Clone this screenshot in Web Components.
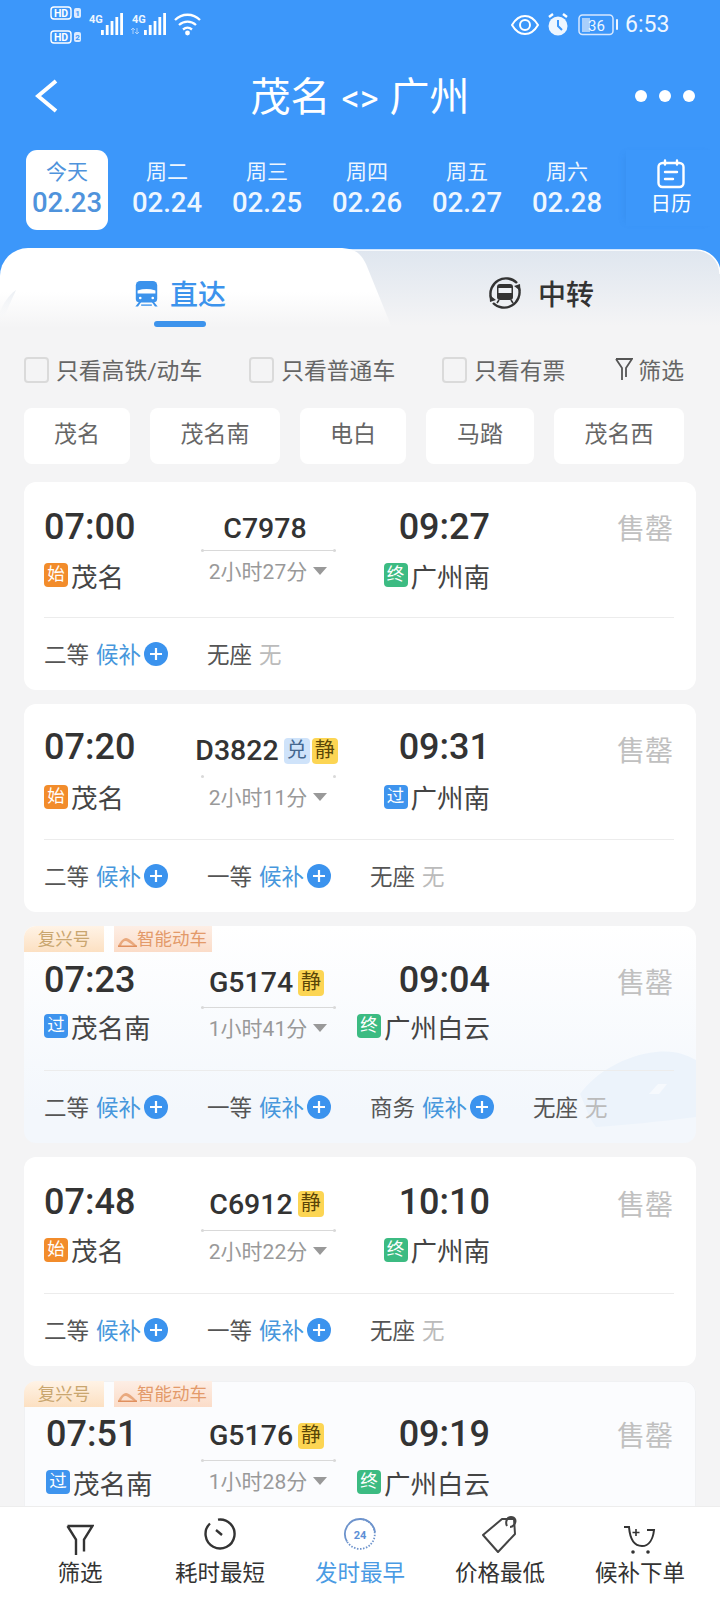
<!DOCTYPE html>
<html lang="zh">
<head>
<meta charset="utf-8">
<title>茂名 广州</title>
<style>
    html, body { margin: 0; height: 1600px; overflow: hidden; }
    body {
        display: flex;
        flex-direction: column;
        width: 720px;
        background: #f4f4f5;
        font-family: Roboto, "Noto Sans CJK SC", sans-serif;
    }
</style>
</head>
<body>
<route-header></route-header>
<tab-bar></tab-bar>
<filter-row></filter-row>
<station-chips names="茂名:106,茂名南:130,电白:106,马踏:108,茂名西:130"></station-chips>

<train-list>
    <train-card from="07:00" to="09:27" no="C7978" start="始:茂名" end="终:广州南" dur="2小时27分"
        seats="二等:w,无座:n"
        style="--top:20px;--r2:46px;--gap:19px;--no-h:48px;--no-pad:4px;--sold:3px"></train-card>
    <train-card from="07:20" to="09:31" no="D3822" marks="兑,静" start="始:茂名" end="过:广州南" dur="2小时11分"
        seats="二等:w,一等:w,无座:n" faint
        style="--top:18px;--r2:49px;--gap:18px;--no-h:54px;--no-pad:3px;--sold:5px"></train-card>
    <train-card from="07:23" to="09:04" no="G5174" marks="静" start="过:茂名南" end="终:广州白云" dur="1小时41分"
        seats="二等:w,一等:w,商务:w,无座:n" fuxing wave
        style="--top:3px;--r2:42px;--gap:23px;--no-h:52px;--no-pad:3px;--seat-h:72px;--sold:4px"></train-card>
    <train-card from="07:48" to="10:10" no="C6912" marks="静" start="始:茂名" end="终:广州南" dur="2小时22分"
        seats="二等:w,一等:w,无座:n"
        style="--top:20px;--r2:45px;--gap:21px;--no-h:53px;--no-pad:1px;--sold:4px"></train-card>
    <train-card from="07:51" to="09:19" no="G5176" marks="静" start="过:茂名南" end="终:广州白云" dur="1小时28分"
        seats="" fuxing
        style="--top:3px;--r1:48px;--r2:48px;--no-h:50px;--no-pad:1px;--c1:154px;--pl:22px;--bg:#fbfcfe;--mt:1px;--sold:3px;min-height:200px;box-shadow:inset 0 0 0 1px #f0f1f3"></train-card>
</train-list>

<bottom-nav></bottom-nav>

<script>
const ICON = {
    back: `<svg width="24" height="34" viewBox="0 0 24 34" fill="none" stroke="#fff" stroke-width="4"><path d="M21 2 3 17l18 15"/></svg>`,
    calendar: `<svg width="30" height="30" viewBox="0 0 30 30" fill="none" stroke="#fff" stroke-width="2.4" stroke-linecap="round"><rect x="2.5" y="4" width="25" height="24" rx="4"/><path d="M9 1.5v4M21 1.5v4M9 13h12M9 20h8"/></svg>`,
    train: `<svg width="25" height="27" viewBox="0 0 28 30"><path d="M7 1h14a5 5 0 0 1 5 5v15a4 4 0 0 1-4 4H6a4 4 0 0 1-4-4V6a5 5 0 0 1 5-5z" fill="#3c93ec"/><path d="M4 11.500c7-2 13-2 20 0v3.500H4z" fill="#fff"/><path d="M6 24 1.500 29.500h3l4-5.500M22 24l4.500 5.500h-3l-4-5.500" fill="#3c93ec"/><path d="M8 28h12" stroke="#3c93ec" stroke-width="1.500"/><circle cx="7" cy="20" r="1.500" fill="#fff"/><circle cx="21" cy="20" r="1.500" fill="#fff"/></svg>`,
    transfer: `<svg width="38" height="38" viewBox="0 0 38 38" fill="none"><path d="M5 24A15.500 15.500 0 0 1 31 9" stroke="#333" stroke-width="2.400"/><path d="M33 14A15.500 15.500 0 0 1 7 29" stroke="#333" stroke-width="2.400"/><path d="M34.500 17 34 10l-6 2zM3.500 21l.5 7 6-2z" fill="#333"/><path d="M14 10h10a3 3 0 0 1 3 3v10a3 3 0 0 1-3 3H14a3 3 0 0 1-3-3V13a3 3 0 0 1 3-3z" fill="#333"/><path d="M12.500 14h13v5h-13z" fill="#eef1f5"/><path d="m13 26-2 3M25 26l2 3" stroke="#333" stroke-width="1.600"/></svg>`,
    funnel: `<svg width="18" height="24" viewBox="0 0 18 24" fill="none" stroke="#555" stroke-width="1.800"><path d="M1 2h16l-6 9v9M1 2l6 9v12"/></svg>`,
    plus: `<svg width="24" height="24" viewBox="0 0 24 24"><circle cx="12" cy="12" r="12" fill="#3b93ee"/><path d="M6 12h12M12 6v12" stroke="#fff" stroke-width="2.200"/></svg>`,
    shoe: `<svg width="19" height="10" viewBox="0 0 19 10"><path d="M0 9c2-4 5-8 8-8 3 0 7 4 11 8h-3C12 6 9 4 7.500 4 5.500 4 4 6 3 9z" fill="#e9a97e"/><path d="M0 8.500h19V10H0z" fill="#e08f5e"/></svg>`,
    navFunnel: `<svg width="28" height="32" viewBox="0 0 28 32" fill="none" stroke="#333" stroke-width="2.400"><path d="M1.500 2h25L18 15.500v12M1.500 2 10 15.500V31"/></svg>`,
    navClock: `<svg width="32" height="32" viewBox="0 0 32 32" fill="none" stroke="#333" stroke-width="2.400"><path d="M14 1.600A14.500 14.500 0 1 1 6 5.500"/><path d="m12 12 6 5"/></svg>`,
    nav24: `<svg width="34" height="34" viewBox="0 0 34 34" fill="none" stroke="#6d93cc" stroke-width="1.800"><path d="M17 2A15 15 0 0 0 4 24.500"/><path d="M17 2a15 15 0 0 1 10 26 15 15 0 0 1-23-3.500" stroke-dasharray="1.500 1.500"/><path d="M17 2a15 15 0 0 1 15 13"/><text x="17" y="21.500" text-anchor="middle" font-family="Roboto" font-weight="700" font-size="11" fill="#5c8fd6" stroke="none">24</text></svg>`,
    navTag: `<svg width="38" height="38" viewBox="0 0 38 38" fill="none" stroke="#444" stroke-width="2"><path d="M2 20 21 4h12l1 15-17 18z" stroke-linejoin="round"/><path d="M26 11c-2-4 0-9 4-9s6 4 3 8c-1 1-2 2-4 2"/></svg>`,
    navCart: `<svg width="34" height="30" viewBox="0 0 34 30" fill="none" stroke="#333" stroke-width="2"><path d="M1 2h5c1 12 5 19 13 19 7 0 11-7 12-16h-7"/><path d="M13 4v7M9.500 7.500h7" stroke-width="1.600"/><circle cx="10" cy="27" r="1.800" fill="#333" stroke="none"/><circle cx="25" cy="27" r="1.800" fill="#333" stroke="none"/></svg>`
};

class StatusBar extends HTMLElement {
    constructor () {
        super();
        const root = this.attachShadow({mode: 'open'});
        root.innerHTML = `<style>
            :host { display: flex; height: 48px; align-items: flex-start; color: #eef6ff; }
            .left { margin-left: 48px; }
            .right { margin-left: 303px; }
            .time { font: 400 23px/50px Roboto, sans-serif; margin-left: 4px; }
            svg { display: block; }
        </style>
        ${this.buildLeft()}
        ${this.buildRight()}
        <span class="time">6:53</span>`;
    }

    buildHd(y, n) {
        return `<rect x="3" y="${y}" width="20" height="12" rx="3" fill="none" stroke="#fff" stroke-width="1.400"/>
            <text x="13" y="${y + 10}" text-anchor="middle" font-size="10.500" font-weight="700" fill="#fff" font-family="Roboto">HD</text>
            <rect x="26" y="${y + 1}" width="7" height="10" rx="2" fill="#dcebff"/>
            <text x="29.500" y="${y + 9}" text-anchor="middle" font-size="8" font-weight="700" fill="#3c97fa" font-family="Roboto">${n}</text>`;
    }

    buildSignal(x) {
        let bars = `<text x="${x}" y="23" font-size="11" font-weight="700" fill="#eef6ff" font-family="Roboto">4G</text>`;
        [5, 10, 14, 18, 22].forEach((h, i) => {
            bars += `<rect x="${x + 12 + i * 4.800}" y="${35 - h}" width="2.800" height="${h}" fill="#fff"/>`;
        });
        return bars;
    }

    buildLeft() {
        return `<svg class="left" width="160" height="48" viewBox="0 0 160 48">
            ${this.buildHd(7, 1)}
            ${this.buildHd(31, 2)}
            ${this.buildSignal(41)}
            ${this.buildSignal(84)}
            <path d="M85 28v6M83 30l2-2 2 2M89 28v6M87 32l2 2 2-2" stroke="#a9d0fb" stroke-width="1" fill="none"/>
            <g fill="none" stroke="#fff" stroke-width="2.300">
                <path d="M127 20c7-7 18-7 25 0"/><path d="M131 25c5-4.500 12-4.500 17 0"/><path d="M135 29.500c3-2.500 6-2.500 9 0"/>
            </g>
            <circle cx="139.500" cy="33" r="2.400" fill="#fff"/>
        </svg>`;
    }

    buildRight() {
        return `<svg class="right" width="110" height="48" viewBox="0 0 110 48">
            <path d="M1 25c7-12 19-12 26 0-7 12-19 12-26 0z" fill="none" stroke="#fff" stroke-width="2"/>
            <circle cx="14" cy="25" r="5" fill="none" stroke="#fff" stroke-width="2"/>
            <circle cx="47" cy="26" r="9.500" fill="#eef6ff"/>
            <path d="M47 20v6l4 4" fill="none" stroke="#3c97fa" stroke-width="2"/>
            <path d="M38 17l4-3M56 17l-4-3" stroke="#fff" stroke-width="2.400"/>
            <rect x="68" y="15" width="34" height="19.500" rx="3.500" fill="none" stroke="#d6e8ff" stroke-width="1.500"/>
            <rect x="71" y="18" width="8" height="14" fill="#a9cffb"/>
            <rect x="105" y="19" width="2" height="11" rx="1" fill="#eef6ff"/>
            <text x="85.500" y="30.500" text-anchor="middle" font-size="15" fill="#eef6ff" font-family="Roboto">36</text>
        </svg>`;
    }
}

class RouteHeader extends HTMLElement {
    constructor () {
        super();
        const days = [['周二', '02.24'], ['周三', '02.25'], ['周四', '02.26'], ['周五', '02.27'], ['周六', '02.28']];
        const root = this.attachShadow({mode: 'open'});

        root.innerHTML = `<style>
            :host { display: block; height: 248px; background: #3c97fa; color: #fff; flex: none; }
            .title {
                display: grid;
                grid-template-columns: 130px 1fr 130px;
                align-items: center;
                box-sizing: border-box;
                height: 100px;
                padding-bottom: 4px;
            }
            .back { padding-left: 35px; display: flex; }
            h1 { margin: 0; height: 96px; font-size: 40px; font-weight: 400; text-align: center; line-height: 100px; }
            h1 span { font-size: 36px; margin: 0 11px; }
            .dots { display: flex; gap: 12px; padding-left: 45px; }
            .dots i { width: 12px; height: 12px; border-radius: 50%; background: #fff; }
            .strip { display: flex; gap: 18px; padding-left: 26px; }
            .cal {
                flex: none;
                box-sizing: border-box;
                width: 90px;
                height: 76px;
                margin-top: 2px;
                display: flex;
                flex-direction: column;
                align-items: center;
                padding-top: 9px;
                font-size: 20.500px;
                line-height: 30px;
                box-shadow: -5px 0 7px -5px rgba(40, 120, 210, .3);
            }
        </style>
        <status-bar></status-bar>
        <div class="title">
            <div class="back">${ICON.back}</div>
            <h1>茂名<span>&lt;&gt;</span>广州</h1>
            <div class="dots"><i></i><i></i><i></i></div>
        </div>
        <div class="strip">
            <date-item day="今天" date="02.23" active></date-item>
            ${days.map(d => `<date-item day="${d[0]}" date="${d[1]}"></date-item>`).join('')}
            <div class="cal">${ICON.calendar}<span>日历</span></div>
        </div>`;
    }
}

class DateItem extends HTMLElement {
    constructor () {
        super();
        const root = this.attachShadow({mode: 'open'});
        root.innerHTML = `<style>
            :host {
                display: flex;
                flex-direction: column;
                flex: none;
                align-items: center;
                box-sizing: border-box;
                width: 82px;
                height: 80px;
                padding-top: 8px;
                margin-top: 2px;
                border-radius: 11px;
                color: #eef6ff;
            }
            :host([active]) { background: #fff; color: #4f93dc; }
            .day { font-size: 21px; line-height: 28px; }
            .date { font-size: 27.500px; font-weight: 500; line-height: 33px; white-space: nowrap; }
        </style>
        <span class="day">${this.getAttribute('day')}</span>
        <span class="date">${this.getAttribute('date')}</span>`;
    }
}

class TabBar extends HTMLElement {
    constructor () {
        super();
        const root = this.attachShadow({mode: 'open'});
        root.innerHTML = `<style>
            :host {
                display: block;
                position: relative;
                height: 100px;
                flex: none;
                background: linear-gradient(#3c97fa 40px, #f4f4f5 40px);
            }
            .bg { position: absolute; left: 0; top: 0; }
            .tabs { position: relative; display: flex; height: 100px; }
            .tab {
                flex: 1;
                display: flex;
                align-items: center;
                justify-content: center;
                height: 90px;
                font-size: 28px;
                font-weight: 500;
                color: #333;
            }
            .tab.on { color: #3c93ec; gap: 11px; }
            .tab.off { gap: 14px; }
            .tab svg { display: block; }
            .bar {
                position: absolute;
                left: 154px;
                top: 73px;
                width: 52px;
                height: 6px;
                border-radius: 3px;
                background: #3c93ec;
            }
        </style>
        <svg class="bg" width="720" height="100" viewBox="0 0 720 100">
            <defs>
                <linearGradient id="l" gradientUnits="userSpaceOnUse" x1="0" y1="0" x2="0" y2="80">
                    <stop offset="0" stop-color="#fff"/><stop offset=".55" stop-color="#fff"/><stop offset="1" stop-color="#f4f4f5"/>
                </linearGradient>
                <linearGradient id="r" gradientUnits="userSpaceOnUse" x1="0" y1="2" x2="0" y2="78">
                    <stop offset="0" stop-color="#dfe6ef"/><stop offset="1" stop-color="#f4f4f5"/>
                </linearGradient>
                <linearGradient id="s" x1="0" y1="0" x2="0" y2="1">
                    <stop offset="0" stop-color="#eaeef3"/><stop offset="1" stop-color="#fafafb" stop-opacity="0"/>
                </linearGradient>
            </defs>
            <rect width="720" height="100" fill="#f4f4f5" y="40"/>
            <path d="M340 2H696a24 24 0 0 1 24 24V100H340z" fill="url(#r)"/>
            <path d="M340 2H696a24 24 0 0 1 24 24" fill="none" stroke="#fff" stroke-width="1.500"/>
            <path d="M0 80V28A28 28 0 0 1 28 0H338C354 0 360 4 366 16L392 80z" fill="url(#l)"/>
            <path d="M0 78 16 42C8 48 3 56 0 64z" fill="url(#s)"/>
        </svg>
        <div class="tabs">
            <div class="tab on">${ICON.train}<span>直达</span></div>
            <div class="tab off">${ICON.transfer}<span>中转</span></div>
        </div>
        <div class="bar"></div>`;
    }
}

class CheckItem extends HTMLElement {
    constructor () {
        super();
        const root = this.attachShadow({mode: 'open'});
        root.innerHTML = `<style>
            :host { display: flex; align-items: center; gap: 7px; }
            i {
                box-sizing: border-box;
                width: 25px;
                height: 26px;
                margin-top: 2px;
                border: 2px solid #dadada;
                border-radius: 4px;
            }
        </style>
        <i></i><slot></slot>`;
    }
}

class FilterRow extends HTMLElement {
    constructor () {
        super();
        const root = this.attachShadow({mode: 'open'});
        root.innerHTML = `<style>
            :host {
                display: flex;
                align-items: center;
                flex: none;
                height: 42px;
                padding-left: 24px;
                font-size: 22.800px;
                color: #666;
                white-space: nowrap;
            }
            .b { margin-left: 47px; }
            .c { margin-left: 47px; }
            .f { margin-left: 50px; display: flex; align-items: center; gap: 5px; }
        </style>
        <check-item>只看高铁/动车</check-item>
        <check-item class="b">只看普通车</check-item>
        <check-item class="c">只看有票</check-item>
        <div class="f">${ICON.funnel}<span>筛选</span></div>`;
    }
}

class StationChips extends HTMLElement {
    constructor () {
        super();
        const chips = this.getAttribute('names').split(',').map(s => s.split(':'));
        const root = this.attachShadow({mode: 'open'});
        root.innerHTML = `<style>
            :host { display: flex; flex: none; gap: 20px; padding: 18px 0 18px 24px; }
            span {
                height: 56px;
                line-height: 54px;
                text-align: center;
                background: #fff;
                border-radius: 8px;
                font-size: 23px;
                color: #666;
            }
        </style>
        ${chips.map(c => `<span style="width:${c[1]}px">${c[0]}</span>`).join('')}`;
    }
}

class TrainList extends HTMLElement {
    constructor () {
        super();
        const root = this.attachShadow({mode: 'open'});
        root.innerHTML = `<style>
            :host {
                display: flex;
                flex-direction: column;
                flex: 1;
                min-height: 0;
                overflow: hidden;
                gap: 14px;
                padding: 0 24px;
            }
        </style>
        <slot></slot>`;
    }
}

class SeatItem extends HTMLElement {
    constructor () {
        super();
        const root = this.attachShadow({mode: 'open'});
        const wait = this.hasAttribute('wait');
        root.innerHTML = `<style>
            :host { display: flex; align-items: center; width: 163px; flex: none; font-size: 22.500px; color: #555; }
            span { padding-bottom: 3px; }
            .s { margin-left: 7px; color: ${wait ? '#4797dc' : '#bbb'}; }
            svg { display: block; margin-left: 3px; }
        </style>
        <span>${this.getAttribute('name')}</span>
        <span class="s">${wait ? '候补' : '无'}</span>
        ${wait ? ICON.plus : ''}`;
    }
}

class TrainCard extends HTMLElement {
    constructor () {
        super();
        const root = this.attachShadow({mode: 'open'});
        const fuxing = this.hasAttribute('fuxing');
        const seats = this.getAttribute('seats');
        root.innerHTML = `${this.buildStyle()}
        ${this.hasAttribute('wave') ? this.buildWave() : ''}
        ${fuxing ? `<div class="tags"><span class="fx">复兴号</span><span class="smart">${ICON.shoe}智能动车</span></div>` : ''}
        <div class="main">
            <div class="t">${this.getAttribute('from')}</div>
            <div class="mid">
                <div class="no"><b>${this.getAttribute('no')}</b>${this.buildMarks()}</div>
                <div class="line ${this.hasAttribute('faint') ? 'faint' : ''}"></div>
                <div class="dur">${this.getAttribute('dur')}<i></i></div>
            </div>
            <div class="t r">${this.getAttribute('to')}</div>
            <div class="sold">售罄</div>
            ${this.buildStation(this.getAttribute('start'), 'st')}
            ${this.buildStation(this.getAttribute('end'), 'st r')}
        </div>
        ${seats ? `<div class="sep"></div><div class="seats">${this.buildSeats(seats)}</div>` : ''}`;
    }

    buildMarks() {
        const marks = (this.getAttribute('marks') || '').split(',').filter(Boolean);
        return marks.map(m => `<span class="mark ${m === '兑' ? 'dui' : ''}">${m}</span>`).join('');
    }

    buildStation(value, cls) {
        const [kind, name] = value.split(':');
        const colour = {'始': '#f28c2b', '过': '#3e94ee', '终': '#3cbb82'}[kind];
        return `<div class="${cls}"><span class="kind" style="background:${colour}">${kind}</span>${name}</div>`;
    }

    buildSeats(seats) {
        return seats.split(',').map(s => {
            const [name, state] = s.split(':');
            return `<seat-item name="${name}" ${state === 'w' ? 'wait' : ''}></seat-item>`;
        }).join('');
    }

    buildWave() {
        return `<svg class="wave" width="120" height="85" viewBox="0 0 120 85">
            <path d="M4 47C20 25 50 8 80 5c20-2 30 3 40 8v57c-40 5-70 8-100 10C12 70 8 55 4 47z" fill="#ecf3fb"/>
            <path d="M73 47l9-10h9l-8 10z" fill="#f6f9fd"/>
        </svg>`;
    }

    buildStyle() {
        return `<style>
            :host {
                display: block;
                position: relative;
                flex: none;
                margin-top: var(--mt, 0);
                border-radius: 12px;
                overflow: hidden;
                background: var(--bg, #fff);
            }
            :host([wave]) { background: linear-gradient(#fff, #f3f7fc 85%); }
            .wave { position: absolute; right: 0; bottom: 11px; }
            .tags { display: flex; gap: 10px; height: 26px; font-size: 17.500px; line-height: 26px; position: relative; }
            .fx {
                width: 80px;
                text-align: center;
                color: #c9a66f;
                background: linear-gradient(#fff3e6, #fce0c2);
            }
            .smart {
                display: flex;
                align-items: center;
                width: 98px;
                padding-left: 4px;
                box-sizing: border-box;
                color: #e39a6a;
                background: linear-gradient(#fdeee5, #fbdcc8);
            }
            .smart svg { margin-top: 6px; }
            .main {
                position: relative;
                display: grid;
                grid-template-columns: var(--c1, 156px) 136px 154px 1fr;
                grid-template-rows: var(--r1, 50px) var(--r2, 50px);
                padding: var(--top, 20px) 23px 0 var(--pl, 20px);
            }
            .t { font-size: 36px; font-weight: 500; color: #333; line-height: var(--r1, 50px); }
            .r { text-align: right; justify-content: flex-end; }
            .mid { grid-row: 1 / 3; grid-column: 2; display: flex; flex-direction: column; align-items: center; }
            .no {
                box-sizing: border-box;
                display: flex;
                align-items: center;
                justify-content: center;
                gap: 2px;
                height: var(--no-h);
                padding-top: var(--no-pad);
                margin-right: 3px;
                white-space: nowrap;
            }
            .no b { font-size: 28.500px; font-weight: 500; color: #333; margin-right: 3px; }
            .mark {
                width: 26px;
                height: 26px;
                line-height: 25px;
                text-align: center;
                font-size: 20px;
                border-radius: 4px;
                color: #5a4508;
                background: #fcd553;
            }
            .mark.dui { background: #cfe3fa; color: #44678f; }
            .line {
                position: relative;
                width: 135px;
                height: 1px;
                flex: none;
                background: #d9d9d9;
            }
            .line::before, .line::after {
                content: "";
                position: absolute;
                top: -1px;
                width: 3px;
                height: 3px;
                border-radius: 50%;
                background: #d9d9d9;
            }
            .line::before { left: 0; }
            .line::after { right: 0; }
            .line.faint { background: transparent; }
            .dur {
                display: flex;
                align-items: center;
                height: 37px;
                font-size: 21px;
                color: #999;
                white-space: nowrap;
            }
            .dur i {
                width: 0;
                height: 0;
                margin: 3px 0 0 6px;
                border: 7px solid transparent;
                border-top: 8px solid #999;
                border-bottom: 0;
            }
            .sold { font-size: 28px; line-height: var(--r1, 50px); padding-top: var(--sold, 3px); color: #c0c0c0; text-align: right; }
            .st { display: flex; align-items: center; font-size: 26.500px; color: #444; white-space: nowrap; grid-column: 1; }
            .st.r { grid-column: 3; }
            .kind {
                width: 24px;
                height: 24px;
                margin-right: 3px;
                line-height: 23px;
                text-align: center;
                font-size: 17.500px;
                color: #fff;
                border-radius: 4px;
            }
            .sep { height: 1px; margin: var(--gap, 15px) 22px 0 20px; background: #ececec; position: relative; }
            .seats {
                position: relative;
                display: flex;
                align-items: center;
                height: var(--seat-h, 72px);
                padding-left: 20px;
            }
        </style>`;
    }
}

class NavItem extends HTMLElement {
    constructor () {
        super();
        const root = this.attachShadow({mode: 'open'});
        root.innerHTML = `<style>
            :host {
                display: flex;
                flex-direction: column;
                align-items: center;
                width: 140px;
                height: 82px;
                font-size: 22.500px;
                color: #333;
                white-space: nowrap;
            }
            :host([active]) { color: #4a9be4; }
            span { line-height: 32px; margin-top: var(--tm, 2px); }
            div { display: flex; align-items: flex-end; box-sizing: border-box; height: 50px; padding-bottom: var(--pb, 2px); }
        </style>
        <div><slot></slot></div>
        <span>${this.getAttribute('label')}</span>`;
    }
}

class BottomNav extends HTMLElement {
    constructor () {
        super();
        const root = this.attachShadow({mode: 'open'});
        root.innerHTML = `<style>
            :host {
                display: flex;
                flex: none;
                box-sizing: border-box;
                height: 94px;
                padding: 0 10px;
                background: #fff;
                border-top: 1px solid #ededed;
            }
        </style>
        <nav-item label="筛选" style="--tm:0px;--pb:1px">${ICON.navFunnel}</nav-item>
        <nav-item label="耗时最短" style="--pb:5px">${ICON.navClock}</nav-item>
        <nav-item label="发时最早" active style="--pb:4px">${ICON.nav24}</nav-item>
        <nav-item label="价格最低">${ICON.navTag}</nav-item>
        <nav-item label="候补下单" style="--tm:0px">${ICON.navCart}</nav-item>`;
    }
}

customElements.define('date-item', DateItem);
customElements.define('status-bar', StatusBar);
customElements.define('route-header', RouteHeader);
customElements.define('tab-bar', TabBar);
customElements.define('check-item', CheckItem);
customElements.define('filter-row', FilterRow);
customElements.define('station-chips', StationChips);
customElements.define('train-list', TrainList);
customElements.define('seat-item', SeatItem);
customElements.define('train-card', TrainCard);
customElements.define('nav-item', NavItem);
customElements.define('bottom-nav', BottomNav);
</script>
</body>
</html>
